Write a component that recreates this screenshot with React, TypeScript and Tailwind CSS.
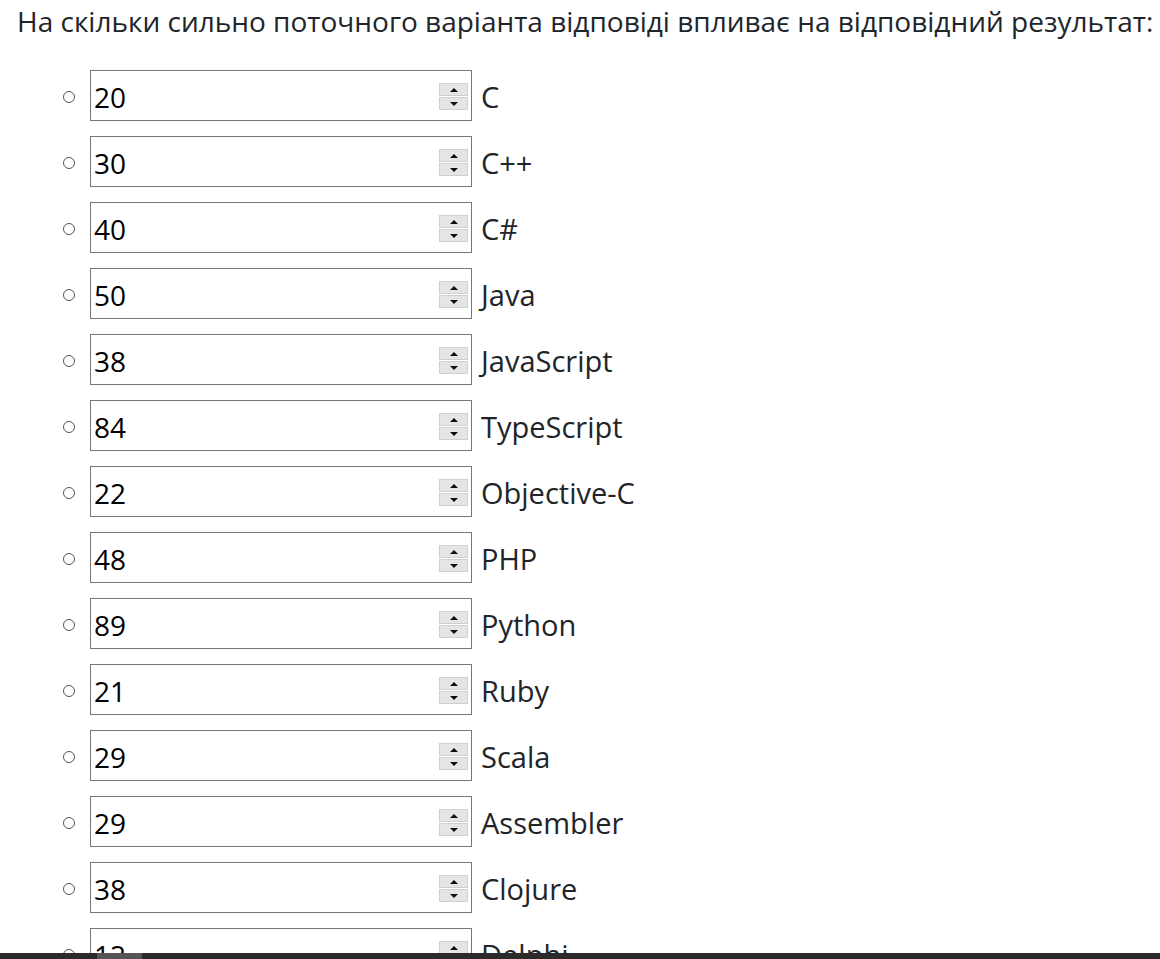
import React from "react";

const items: [string, number][] = [
  ["C", 20],
  ["C++", 30],
  ["C#", 40],
  ["Java", 50],
  ["JavaScript", 38],
  ["TypeScript", 84],
  ["Objective-C", 22],
  ["PHP", 48],
  ["Python", 89],
  ["Ruby", 21],
  ["Scala", 29],
  ["Assembler", 29],
  ["Clojure", 38],
  ["Delphi", 12],
];

function Spinner() {
  return (
    <div className="flex flex-col gap-px w-[29px] mr-[3px] mt-[2px]">
      <div className="h-[13px] bg-[#e5e5e5] border border-[#d0d0d0] flex items-center justify-center">
        <svg width="8" height="4" viewBox="0 0 8 4"><path d="M0 4 L4 0 L8 4 Z" fill="#111" /></svg>
      </div>
      <div className="h-[13px] bg-[#e5e5e5] border border-[#d0d0d0] flex items-center justify-center">
        <svg width="8" height="4" viewBox="0 0 8 4"><path d="M0 0 L4 4 L8 0 Z" fill="#111" /></svg>
      </div>
    </div>
  );
}

export default function App() {
  return (
    <div
      className="min-h-screen bg-white text-[#212529] overflow-hidden"
      style={{ fontFamily: '"Open Sans", "Noto Sans", sans-serif' }}
    >
      <div className="pl-[17px] pt-[2px]">
        <p className="text-[28px] leading-[38px] whitespace-nowrap">
          На скільки сильно поточного варіанта відповіді впливає на відповідний результат:
        </p>
        <ul className="mt-[30px] flex flex-col gap-[15px]">
          {items.map(([name, val]) => (
            <li key={name} className="flex items-center h-[51px]">
              <span className="ml-[46px] mt-[2px] w-[12px] h-[12px] rounded-full border border-[#555] mr-[15px]" />
              <div className="w-[382px] h-[51px] border border-[#767676] flex items-center justify-between pl-[3px] bg-white">
                <span className="text-[28px] text-black leading-none mt-[2px]">{val}</span>
                <Spinner />
              </div>
              <span className="ml-[9px] text-[29px] leading-none text-[#212529] mt-[1px]">{name}</span>
            </li>
          ))}
        </ul>
      </div>
      <div className="fixed left-0 right-0 bottom-0 h-[6px] bg-[#2b2b2b]">
        <div className="ml-[97px] w-[45px] h-full bg-[#555]" />
      </div>
    </div>
  );
}
